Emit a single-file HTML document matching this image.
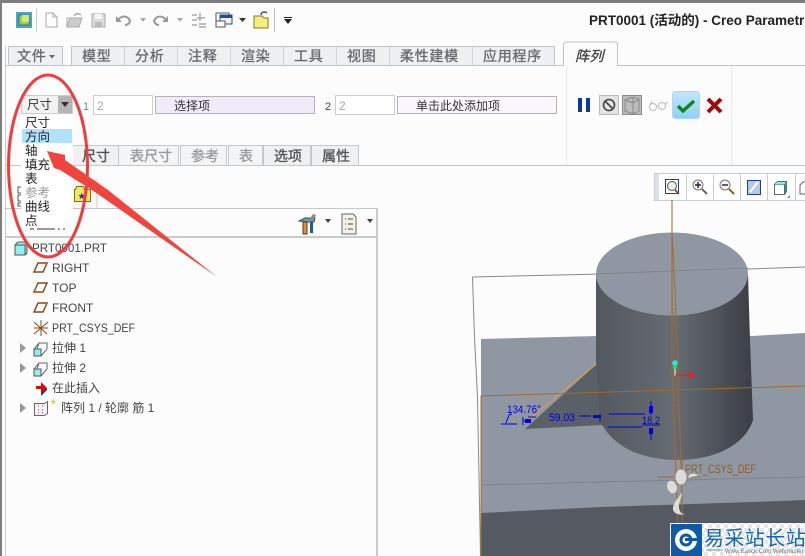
<!DOCTYPE html>
<html><head><meta charset="utf-8"><style>
html,body{margin:0;padding:0;width:805px;height:556px;overflow:hidden;background:#fcfcfc}
svg{display:block}
text{font-family:"Liberation Sans","Noto Sans CJK SC",sans-serif;white-space:pre}
.tab{font-size:14px;fill:#666b70;stroke:#666b70;stroke-width:.35px;letter-spacing:.7px}
.sub{font-size:14px;fill:#555;stroke:#555;stroke-width:.35px}
.subg{font-size:14px;fill:#999;stroke:#999;stroke-width:.35px}
.dd{font-size:12.500px;fill:#222}
.tr{font-size:12px;fill:#444}
.dim{font-size:11px;fill:#0000e0}
</style></head><body>
<svg width="805" height="556" viewBox="0 0 805 556" xmlns="http://www.w3.org/2000/svg">
<defs>
<linearGradient id="cyl" x1="0" x2="1" y1="0" y2="0">
<stop offset="0" stop-color="#53585f"/><stop offset=".12" stop-color="#585d64"/><stop offset=".5" stop-color="#666c73"/><stop offset=".85" stop-color="#484c52"/><stop offset="1" stop-color="#3b3e43"/>
</linearGradient>
<linearGradient id="blue" x1="0" x2="0" y1="0" y2="1"><stop offset="0" stop-color="#c4e6fb"/><stop offset="1" stop-color="#8fd0f8"/></linearGradient>
<pattern id="chk" width="8" height="8" patternUnits="userSpaceOnUse"><rect width="8" height="8" fill="#fff"/><rect width="4" height="4" fill="#e6e6e6"/><rect x="4" y="4" width="4" height="4" fill="#e6e6e6"/></pattern>
</defs>
<rect width="805" height="556" fill="#fcfcfc"/>
<rect width="805" height="3" fill="#7d7d7d"/>
<rect width="2" height="556" fill="#7d7d7d"/>
<rect x="5" y="46" width="1" height="510" fill="#c8cccf"/>

<!-- quick access toolbar -->
<rect x="16" y="12" width="16" height="16" fill="#4aa3c8"/><rect x="19" y="15" width="10" height="10" fill="#9fd04a" stroke="#3d6f8f"/><rect x="22" y="15" width="7" height="7" fill="#d8e86a"/>
<rect x="36" y="8" width="1" height="24" fill="#ccc"/>
<path d="M46 13h7l4 4v10H46z" fill="#fff" stroke="#aaa"/><path d="M53 13v4h4" fill="none" stroke="#aaa"/>
<path d="M67 27l3-9h12l-3 9z" fill="#ccc" stroke="#aaa"/><path d="M67 27v-9h5" fill="none" stroke="#aaa"/><path d="M74 16c2-3 5-3 7-1" fill="none" stroke="#aaa" stroke-width="1.5"/>
<rect x="92" y="14" width="13" height="13" fill="#ddd" stroke="#aaa"/><rect x="95" y="14" width="7" height="5" fill="#f5f5f5"/><rect x="95" y="22" width="7" height="5" fill="#bbb"/>
<path d="M118 21c2-6 10-6 12 0-1 3-3 4-5 4" fill="none" stroke="#999" stroke-width="2"/><path d="M116 16v6h6z" fill="#999"/>
<path d="M140 18h6l-3 4z" fill="#aaa"/>
<path d="M166 21c-2-6-10-6-12 0 1 3 3 4 5 4" fill="none" stroke="#999" stroke-width="2"/><path d="M168 16v6h-6z" fill="#999"/>
<path d="M177 18h6l-3 4z" fill="#aaa"/>
<path d="M192 15h5M192 20h5M192 25h5M200 13v8M197 18h8M199 24h7M199 27h7" stroke="#aaa" stroke-width="1.5" fill="none"/>
<rect x="216" y="13" width="13" height="10" fill="#fff" stroke="#555"/><rect x="220" y="15" width="12" height="9" fill="#eef" stroke="#1a4f9c"/><rect x="216" y="21" width="9" height="6" fill="#fff" stroke="#555"/><rect x="220" y="15" width="12" height="3" fill="#1a4f9c"/>
<path d="M239 18h7l-3.500 4z" fill="#333"/>
<path d="M254 16h8l2 2h4v10h-14z" fill="#f7ee80" stroke="#807a20"/><path d="M261 15c0-3 4-4 6-2" fill="none" stroke="#444" stroke-width="1.300"/>
<rect x="274" y="8" width="1" height="24" fill="#bbb"/>
<rect x="284" y="17" width="8" height="1" fill="#222"/><path d="M284 19h8l-4 5z" fill="#222"/>

<text x="589" y="25" style="font-size:13.500px;font-weight:700;fill:#222">PRT0001 (活动的) - Creo Parametric</text>

<!-- tabs -->
<rect x="5" y="65" width="800" height="1" fill="#bfc3c6"/>
<rect x="8.500" y="46.500" width="54" height="19" fill="#eef0f2" stroke="#bfc3c6"/>
<rect x="71.500" y="46.500" width="483" height="19" fill="#eef0f2" stroke="#bfc3c6"/>
<path d="M124.500 47v18M177.500 47v18M230.500 47v18M283.500 47v18M336.500 47v18M389.500 47v18M472.500 47v18" stroke="#cfd3d6"/>
<text x="17" y="61" class="tab">文件</text><path d="M49 55h6l-3 3.500z" fill="#666"/>
<text x="82" y="61" class="tab">模型</text><text x="135" y="61" class="tab">分析</text><text x="188" y="61" class="tab">注释</text><text x="241" y="61" class="tab">渲染</text><text x="294" y="61" class="tab">工具</text><text x="347" y="61" class="tab">视图</text><text x="400" y="61" class="tab">柔性建模</text><text x="483" y="61" class="tab">应用程序</text>
<path d="M563.500 66V44l2-2h50l2 2v22" fill="#fcfcfc" stroke="#bfc3c6"/>
<text x="575" y="61" style="font-size:14px;font-style:italic;fill:#444;stroke:#444;stroke-width:.35px;letter-spacing:.5px">阵列</text>

<!-- ribbon fields -->
<rect x="566" y="66" width="1" height="99" fill="#e8e8e8"/><rect x="731" y="66" width="1" height="99" fill="#e8e8e8"/>
<rect x="21.500" y="95.500" width="51" height="18" fill="#f2f2f2" stroke="#ccc"/><rect x="58" y="96" width="14" height="17" fill="#b4b4b4"/><path d="M61 102h8l-4 5z" fill="#333"/>
<text x="27" y="109" style="font-size:12.500px;fill:#333">尺寸</text>
<text x="83" y="110" style="font-size:11px;fill:#6b8aa8">1</text>
<rect x="93.500" y="95.500" width="59" height="19" fill="#fff" stroke="#ccc"/><text x="97" y="110" style="font-size:12px;fill:#aaa">2</text>
<rect x="155.500" y="96.500" width="159" height="17" fill="#efebf8" stroke="#b4b4b4"/><text x="174" y="110" style="font-size:12px;fill:#333">选择项</text>
<text x="325" y="110" style="font-size:11px;fill:#444">2</text>
<rect x="335.500" y="95.500" width="59" height="19" fill="#fff" stroke="#ccc"/><text x="339" y="110" style="font-size:12px;fill:#aaa">2</text>
<rect x="397.500" y="96.500" width="159" height="17" fill="#f9f7fd" stroke="#b4b4b4"/><text x="416" y="110" style="font-size:12px;fill:#333">单击此处添加项</text>
<rect x="578" y="98" width="4" height="14" fill="#0c3a96"/><rect x="586" y="98" width="4" height="14" fill="#0c3a96"/>
<rect x="599.500" y="95.500" width="19" height="19" fill="#e4e4e4" stroke="#bbb"/><circle cx="609" cy="105" r="5.500" fill="none" stroke="#444" stroke-width="1.600"/><path d="M605 101l8 8" stroke="#444" stroke-width="1.600"/>
<rect x="622.500" y="95.500" width="19" height="19" fill="#bcbcbc" stroke="#8a8a8a"/><path d="M625 100l8-3 6 2v12l-6 3-8-3zM633 97v17M625 100l8 3 6-4" fill="none" stroke="#888"/>
<g fill="none" stroke="#bbb"><circle cx="653" cy="107" r="3.500"/><circle cx="662" cy="106" r="3.500"/><path d="M656 106h3M665 104l3-2M650 105l2-4"/></g>
<rect x="672.500" y="91.500" width="27" height="27" rx="3" fill="url(#blue)" stroke="#a8d8f4"/><path d="M678 106l5 5 11-10" fill="none" stroke="#0b8a14" stroke-width="3.500"/>
<path d="M708 99l13 13M721 99l-13 13" stroke="#9c0a0a" stroke-width="4"/>

<!-- sub tabs -->
<rect x="5" y="165" width="800" height="1" fill="#bfc3c6"/>
<rect x="70.500" y="145.500" width="48" height="20" fill="#eef0f2" stroke="#c4c8cb"/><rect x="118.500" y="145.500" width="60" height="20" fill="#f3f4f5" stroke="#c4c8cb"/><rect x="180.500" y="145.500" width="46" height="20" fill="#f3f4f5" stroke="#c4c8cb"/><rect x="228.500" y="145.500" width="34" height="20" fill="#f3f4f5" stroke="#c4c8cb"/><rect x="263.500" y="145.500" width="47" height="20" fill="#eef0f2" stroke="#c4c8cb"/><rect x="311.500" y="145.500" width="47" height="20" fill="#eef0f2" stroke="#c4c8cb"/>
<text x="82" y="161" class="sub">尺寸</text><text x="130" y="161" class="subg">表尺寸</text><text x="191" y="161" class="subg">参考</text><text x="239" y="161" class="subg">表</text><text x="274" y="161" class="sub">选项</text><text x="322" y="161" class="sub">属性</text>

<!-- panel -->
<path d="M62 208v-28h35v28" fill="#f7f7f7" stroke="#d0d0d0"/>
<path d="M18 187h4v6h-4zM18 195h4v6h-4zM18 203h4v3h-4zM22 190h5M22 198h5" fill="none" stroke="#555"/>
<path d="M74.500 201.500v-12h1l1-3h7l1 3h6v12z" fill="#f5e85c" stroke="#77701a"/><text x="79" y="203" style="font-size:14px;font-weight:700;fill:#1420d0">*</text>
<rect x="5" y="208" width="373" height="1" fill="#c4c8cb"/><rect x="5" y="236" width="373" height="2" fill="#c8cccf"/><rect x="376" y="208" width="2" height="348" fill="#c8cccf"/>
<!-- tree toolbar -->
<path d="M299 221l6-3h10l-1 4h-6z" fill="#6aa0b0" stroke="#355"/><rect x="303" y="222" width="4" height="12" fill="#d89a20" stroke="#634"/><rect x="310" y="222" width="3" height="11" fill="#1c5aa8"/><path d="M309 220l4-6 3 1-3 6z" fill="#889"/>
<path d="M325 219h6l-3 4z" fill="#444"/>
<path d="M342 214h11l3 3v17h-14z" fill="#f4f2e6" stroke="#666"/><path d="M345 219h1M348 219h5M345 224h1M348 224h5M345 229h1M348 229h5" stroke="#444"/>
<path d="M367 219h6l-3 4z" fill="#444"/>

<!-- tree -->
<path d="M15 245l3-3h9v11l-2 2H15z" fill="#8ff0f0" stroke="#555"/><path d="M15 245h10v10M25 245l2-3" fill="none" stroke="#555"/>
<text x="32" y="252" class="tr" textLength="75" lengthAdjust="spacingAndGlyphs">PRT0001.PRT</text>
<g fill="none" stroke="#8a4a1a" stroke-width="1.500"><path d="M34 272l4-9h9l-4 9z"/><path d="M34 292l4-9h9l-4 9z"/><path d="M34 312l4-9h9l-4 9z"/></g>
<text x="52" y="272" class="tr">RIGHT</text><text x="52" y="292" class="tr">TOP</text><text x="52" y="312" class="tr">FRONT</text>
<path d="M34 322l13 12M48 322l-14 12M41 320v16M34 328h14" stroke="#8a4a1a" fill="none"/>
<text x="52" y="332" class="tr" textLength="83" lengthAdjust="spacingAndGlyphs">PRT_CSYS_DEF</text>
<path d="M20 343l6 5-6 5zM20 363l6 5-6 5zM20 403l6 5-6 5z" fill="#999"/>
<g><rect x="34" y="349" width="7" height="7" fill="#8ff0f0" stroke="#555"/><path d="M34 349l5-6h8v6l-6 7M39 343l-2 6" fill="none" stroke="#666"/><rect x="34" y="369" width="7" height="7" fill="#8ff0f0" stroke="#555"/><path d="M34 369l5-6h8v6l-6 7M39 363l-2 6" fill="none" stroke="#666"/></g>
<text x="52" y="352" class="tr">拉伸 1</text><text x="52" y="372" class="tr">拉伸 2</text>
<path d="M36 386h5v-4l6 6-6 5v-4h-5z" fill="#d80808"/><path d="M41 393l6-5v2l-6 6z" fill="#333"/>
<text x="52" y="392" class="tr">在此插入</text>
<path d="M34.500 403.500h10l3-2v12l-3 2h-10z" fill="#f8f4fc" stroke="#666"/><path d="M38 406h1M42 406h1M38 410h1M42 410h1M38 413h1M42 413h1" stroke="#9020d0"/>
<text x="51" y="408" style="font-size:12px;font-weight:700;fill:#d8d800">*</text>
<text x="61" y="412" class="tr">阵列 1 / 轮廓 筋 1</text>

<!-- view toolbar -->
<rect x="654.500" y="173.500" width="151" height="27" fill="#fff" stroke="#c8cdd4"/><rect x="655" y="174" width="4" height="26" fill="#dde1e8"/>
<path d="M686.500 174v26M713.500 174v26M740.500 174v26M767.500 174v26M795.500 174v26" stroke="#ccc"/>
<rect x="665.500" y="179.500" width="13" height="14" fill="#fff" stroke="#1a3f94"/>
<circle cx="672" cy="186" r="4.500" fill="#eee" stroke="#555"/><path d="M675 190l4 4" stroke="#7a4a20" stroke-width="1.600"/>
<circle cx="698" cy="185" r="5" fill="#f4f4f4" stroke="#777"/><path d="M695 185h6M698 182v6" stroke="#222" stroke-width="1.400"/><path d="M702 189l5 5" stroke="#7a4a20" stroke-width="1.800"/>
<circle cx="725" cy="185" r="5" fill="#f4f4f4" stroke="#777"/><path d="M722 185h6" stroke="#222" stroke-width="1.400"/><path d="M729 189l5 5" stroke="#7a4a20" stroke-width="1.800"/>
<rect x="747.500" y="180.500" width="13" height="14" fill="#b8c8e8" stroke="#1a3f94"/><path d="M750 192l8-10" stroke="#fff" stroke-width="2"/>
<path d="M774.500 184.500l3-3h9v10l-2 3h-10z" fill="#fff" stroke="#666"/><path d="M774.500 184.500h10l2-3-2 3v10" fill="none" stroke="#666"/><path d="M777 182h9l-2 2.500h-9z" fill="#8ee8e8"/><path d="M785 185l2-3v9l-2 3z" fill="#2a8a96"/><path d="M787 198h3v-3z" fill="#888"/>
<path d="M800 185l3-3h5v12h-8z" fill="#fff" stroke="#666"/>

<!-- 3D -->
<path d="M472.500 277l130-3 203-7" fill="none" stroke="#888"/>
<path d="M472.500 277l2 60 3 60 3 159" fill="none" stroke="#888"/>
<path d="M481 339l117-3h154l53-3V556H481z" fill="#8f98a2"/>
<path d="M481 513l120-6 180-6 24-1V556H481z" fill="#555a62"/>
<path d="M481 485l324-8" stroke="#7c858f"/>
<path d="M525 429l75-68 3 64z" fill="#5a6068"/>
<path d="M523 424l76-62" stroke="#f09a28"/>
<path d="M596 274V360L600 420C610 445 640 460 677 460C715 460 745 445 753 420L750 340L748 274z" fill="url(#cyl)"/>
<ellipse cx="672" cy="274" rx="76" ry="41.500" fill="#8f98a2"/>
<path d="M596 274l76-3 76-3" fill="none" stroke="#7d8287" stroke-width=".8"/>
<g fill="none" stroke="#a5692c">
<path d="M672 200v110l0 60 1 20 2 60 2 50 1 56"/>
<path d="M672 232l3 60 3 70 1 40 2 60 1 40 1 54"/>
<path d="M481 396l324-10"/>
<path d="M481 396v160"/>
<path d="M658 477h42"/>
<path d="M676 459h6v18"/>
</g>
<path d="M672 288l6 130" stroke="#a5692c" stroke-dasharray="2 2" stroke-width=".8"/>
<path d="M675 366v10" stroke="#fff"/><path d="M675 375h16" stroke="#e02020"/>
<circle cx="675" cy="363" r="2.800" fill="#20e8e8"/><circle cx="675" cy="367" r="2" fill="#20e060"/><circle cx="691" cy="375" r="2.800" fill="#f02020"/>
<text x="685" y="473" style="font-size:11.500px;fill:#8f5c28" textLength="71" lengthAdjust="spacingAndGlyphs">PRT_CSYS_DEF</text>
<!-- footprint -->
<g fill="#dcdcd8"><ellipse cx="681" cy="477" rx="5.500" ry="7.500"/><ellipse cx="672" cy="487" rx="4.800" ry="6.500" transform="rotate(-20 672 487)"/><path d="M688 478c1-5 7-6 10-2-3 0-7 1-10 2z"/><path d="M682 492c-3 6-9 10-9 17 0 4 6 7 12 5-5 0-6-4-6-8 0-5 3-9 3-14z"/></g>
<!-- dims -->
<g fill="none" stroke="#0000e0"><path d="M501 424h16M506 423l3-8 3-1M523 417v8M523 421h6M528 417h8M579 416h12M600 414v8M609 414h36M608 427h34M651 401v14M651 430v10M642 425h18"/></g>
<path d="M525 419h6v4h-6zM593 415h8v3h-8zM649 406h4v7h-4zM649 428h4v6h-4z" fill="#0000e0"/>
<text x="507" y="413" class="dim" textLength="34" lengthAdjust="spacingAndGlyphs">134.76°</text><text x="549" y="421" class="dim" textLength="26" lengthAdjust="spacingAndGlyphs">59.03</text><text x="642" y="424" class="dim" textLength="18" lengthAdjust="spacingAndGlyphs">18.2</text>

<!-- watermark -->
<rect x="670" y="523" width="135" height="33" fill="url(#chk)"/>
<rect x="671" y="524" width="31" height="32" fill="#0d5ba6"/>
<circle cx="686" cy="540" r="11" fill="#fff"/><circle cx="686" cy="540" r="5" fill="none" stroke="#0d5ba6" stroke-width="3"/><rect x="685" y="538" width="12" height="3" fill="#0d5ba6"/>
<text x="704" y="545" style="font-size:20px;fill:#1168b0;letter-spacing:.4px">易采站长站</text>
<path d="M706 550h17" stroke="#888"/>
<text x="725" y="553" style="font-size:6px;fill:#777">Www.Easck.Com Webmaster</text>

<!-- dropdown -->
<rect x="21" y="114" width="52" height="116" fill="#fff"/>
<rect x="22" y="129" width="50" height="14" fill="#b0e1ff"/>
<text x="25" y="127" class="dd">尺寸</text><text x="25" y="141" class="dd">方向</text><text x="25" y="155" class="dd">轴</text><text x="25" y="169" class="dd">填充</text><text x="25" y="183" class="dd">表</text><text x="25" y="197" style="font-size:12.500px;fill:#999">参考</text><text x="25" y="211" class="dd">曲线</text><text x="25" y="225" class="dd">点</text>
<path d="M30 229h4M37 229h18M58 229h2M63 229h2" stroke="#333"/>

<!-- annotation -->
<ellipse cx="48" cy="166" rx="39.500" ry="91" fill="none" stroke="#f23c3c" stroke-width="3"/>
<path d="M47 151L65 155L65 160L108 190L217 277L92 190L60 170L54 168z" fill="#f0453f"/>
</svg>
</body></html>
